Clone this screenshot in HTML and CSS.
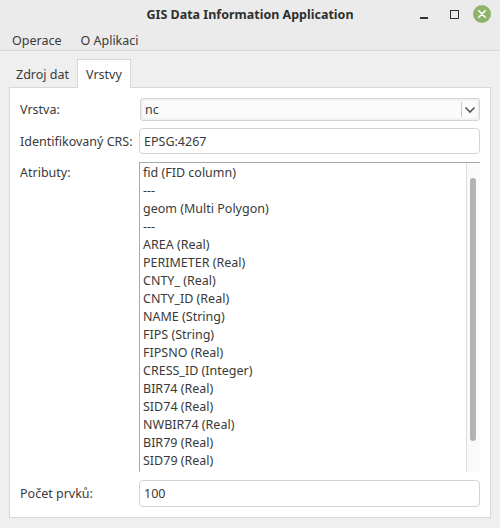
FILE: index.html
```html
<!DOCTYPE html>
<html lang="cs">
<head>
<meta charset="utf-8">
<title>GIS Data Information Application</title>
<link rel="stylesheet" href="styles.css">
</head>
<body>
<div class="window">
  <div class="titlebar">
    <div class="title">GIS Data Information Application</div>
    <div class="controls">
      <span class="ctl min"></span>
      <span class="ctl max"></span>
      <span class="ctl close">
        <svg width="18" height="18" viewBox="0 0 18 18"><circle cx="9" cy="9" r="9" fill="#8db46a"/><path d="M5.8 5.8 L12.2 12.2 M12.2 5.8 L5.8 12.2" stroke="#fff" stroke-width="1.6" stroke-linecap="round"/></svg>
      </span>
    </div>
  </div>
  <div class="menubar">
    <span class="menu">Operace</span>
    <span class="menu">O Aplikaci</span>
  </div>
  <div class="tabs">
    <div class="tab">Zdroj dat</div>
    <div class="tab active">Vrstvy</div>
  </div>
  <div class="panel">
    <div class="label">Vrstva:</div>
    <div class="combo">
      <span class="combo-text">nc</span>
      <span class="combo-btn">
        <svg width="12" height="8" viewBox="0 0 12 8"><path d="M1.5 1.5 L6 6 L10.5 1.5" fill="none" stroke="#555" stroke-width="1.6"/></svg>
      </span>
    </div>
    <div class="label">Identifikovaný CRS:</div>
    <div class="input">EPSG:4267</div>
    <div class="label label-top">Atributy:</div>
    <div class="list">
      <div class="items">
        <div class="item">fid (FID column)</div>
        <div class="item">---</div>
        <div class="item">geom (Multi Polygon)</div>
        <div class="item">---</div>
        <div class="item">AREA (Real)</div>
        <div class="item">PERIMETER (Real)</div>
        <div class="item">CNTY_ (Real)</div>
        <div class="item">CNTY_ID (Real)</div>
        <div class="item">NAME (String)</div>
        <div class="item">FIPS (String)</div>
        <div class="item">FIPSNO (Real)</div>
        <div class="item">CRESS_ID (Integer)</div>
        <div class="item">BIR74 (Real)</div>
        <div class="item">SID74 (Real)</div>
        <div class="item">NWBIR74 (Real)</div>
        <div class="item">BIR79 (Real)</div>
        <div class="item">SID79 (Real)</div>
        <div class="item">NWBIR79 (Real)</div>
      </div>
      <div class="scrollbar"><div class="thumb"></div></div>
    </div>
    <div class="label">Počet prvků:</div>
    <div class="input count">100</div>
  </div>
</div>
</body>
</html>
```
FILE: styles.css
```css
html, body {
  margin: 0;
  padding: 0;
}
body {
  font-family: "Noto Sans", "DejaVu Sans", sans-serif;
  font-size: 12.5px;
  color: #3a3a3a;
  background: #efefef;
}
.window {
  width: 500px;
  height: 528px;
  background: #efefef;
  display: flex;
  flex-direction: column;
  overflow: hidden;
}
.titlebar {
  height: 30px;
  flex: none;
  display: flex;
  align-items: center;
  justify-content: center;
  position: relative;
  background: #ebebeb;
}
.title {
  font-weight: bold;
  font-size: 12.5px;
  color: #2f2f2f;
  margin-top: -1px;
}
.controls {
  position: absolute;
  right: 9px;
  top: 5px;
  display: flex;
  align-items: center;
}
.ctl {
  display: flex;
  align-items: center;
  justify-content: center;
  width: 30px;
  height: 18px;
}
.min::before {
  content: "";
  width: 8px;
  height: 1.5px;
  background: #333;
  margin-top: 8px;
}
.max::before {
  content: "";
  width: 7px;
  height: 7px;
  border: 1.5px solid #333;
}
.close {
  width: 18px;
  margin-left: 4px;
}
.menubar {
  height: 20px;
  flex: none;
  display: flex;
  align-items: center;
  padding-left: 12px;
  gap: 19px;
  background: #ebebeb;
  border-bottom: 1px solid #d7d7d7;
}
.tabs {
  display: flex;
  flex: none;
  padding: 9px 0 0 8px;
  height: 28px;
  box-sizing: content-box;
  margin-bottom: -1px;
  position: relative;
  z-index: 1;
}
.tab {
  display: flex;
  align-items: center;
  padding: 0 8px;
  height: 28px;
  box-sizing: border-box;
  color: #3a3a3a;
}
.tab.active {
  background: #fff;
  border: 1px solid #d8d8d8;
  border-bottom: none;
  height: 29px;
  margin-top: -1px;
}
.panel {
  margin: 0 9px 10px 9px;
  flex: 1;
  background: #fff;
  border: 1px solid #d8d8d8;
  padding: 10px 10px 10px 10px;
  display: grid;
  grid-template-columns: 119px 1fr;
  grid-template-rows: 23px 26px 312px 27px;
  row-gap: 7px;
  align-items: center;
  align-content: start;
}
.label {
  color: #3a3a3a;
}
.label-top {
  align-self: start;
  padding-top: 3px;
}
.combo {
  height: 23px;
  box-sizing: border-box;
  margin-left: 1px;
  border: 1px solid #d3d3d3;
  border-radius: 3px;
  box-shadow: inset 0 0 0 2px #f1f3f1;
  background: #fafbfa;
  display: flex;
  align-items: center;
}
.combo-text {
  flex: 1;
  padding-left: 4px;
}
.combo-btn {
  width: 16px;
  height: 15px;
  border-left: 1px solid #c8c8c8;
  display: flex;
  align-items: center;
  justify-content: center;
  margin-right: 1px;
}
.input {
  height: 26px;
  box-sizing: border-box;
  border: 1px solid #d3d3d3;
  border-radius: 4px;
  display: flex;
  align-items: center;
  padding-left: 4px;
  background: #fff;
}
.input.count {
  height: 27px;
}
.list {
  height: 310px;
  align-self: start;
  margin-top: 1px;
  border-top: 1px solid #a9a9a9;
  border-left: 1px solid #a9a9a9;
  display: flex;
  overflow: hidden;
  box-sizing: border-box;
}
.items {
  flex: 1;
  padding: 1px 0 0 3px;
  overflow: hidden;
}
.item {
  height: 18px;
  line-height: 18px;
  white-space: nowrap;
}
.scrollbar {
  width: 13px;
  border-left: 1px solid #dcdcdc;
  background: #fafafa;
  position: relative;
}
.thumb {
  position: absolute;
  left: 3px;
  top: 15px;
  width: 6px;
  height: 263px;
  border-radius: 3px;
  background: #b3b3b3;
}
```
